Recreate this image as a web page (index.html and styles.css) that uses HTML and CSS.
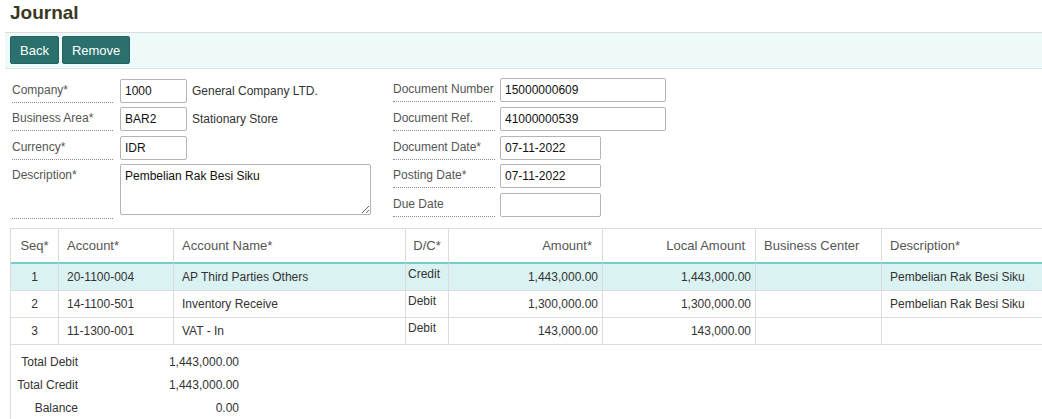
FILE: index.html
```html
<!DOCTYPE html>
<html>
<head>
<meta charset="utf-8">
<title>Journal</title>
<link rel="stylesheet" href="styles.css">
</head>
<body>
<h1 class="title">Journal</h1>
<div class="toolbar">
  <button class="btn">Back</button>
  <button class="btn">Remove</button>
</div>
<div class="form">
  <div class="col col-left">
    <div class="row">
      <label class="lbl">Company*</label>
      <input class="inp inp-s" value="1000">
      <span class="desc-text">General Company LTD.</span>
    </div>
    <div class="row">
      <label class="lbl">Business Area*</label>
      <input class="inp inp-s" value="BAR2">
      <span class="desc-text">Stationary Store</span>
    </div>
    <div class="row">
      <label class="lbl">Currency*</label>
      <input class="inp inp-s" value="IDR">
    </div>
    <div class="row">
      <label class="lbl lbl-tall">Description*</label>
      <textarea class="txa">Pembelian Rak Besi Siku</textarea>
    </div>
  </div>
  <div class="col col-right">
    <div class="row">
      <label class="lbl lbl-r">Document Number</label>
      <input class="inp inp-l" value="15000000609">
    </div>
    <div class="row">
      <label class="lbl lbl-r">Document Ref.</label>
      <input class="inp inp-l" value="41000000539">
    </div>
    <div class="row">
      <label class="lbl lbl-r">Document Date*</label>
      <input class="inp inp-m" value="07-11-2022">
    </div>
    <div class="row">
      <label class="lbl lbl-r">Posting Date*</label>
      <input class="inp inp-m" value="07-11-2022">
    </div>
    <div class="row">
      <label class="lbl lbl-r">Due Date</label>
      <input class="inp inp-m" value="">
    </div>
  </div>
</div>
<div class="grid-wrap">
  <table class="grid">
    <colgroup>
      <col class="c-seq">
      <col class="c-acc">
      <col class="c-name">
      <col class="c-dc">
      <col class="c-amt">
      <col class="c-lamt">
      <col class="c-bc">
      <col>
    </colgroup>
    <thead>
      <tr>
        <th class="center">Seq*</th>
        <th>Account*</th>
        <th>Account Name*</th>
        <th class="center">D/C*</th>
        <th class="right">Amount*</th>
        <th class="right">Local Amount</th>
        <th>Business Center</th>
        <th class="last">Description*</th>
      </tr>
    </thead>
    <tbody>
      <tr class="sel">
        <td class="center">1</td>
        <td>20-1100-004</td>
        <td>AP Third Parties Others</td>
        <td class="dc">Credit</td>
        <td class="num">1,443,000.00</td>
        <td class="num">1,443,000.00</td>
        <td></td>
        <td class="last">Pembelian Rak Besi Siku</td>
      </tr>
      <tr>
        <td class="center">2</td>
        <td>14-1100-501</td>
        <td>Inventory Receive</td>
        <td class="dc">Debit</td>
        <td class="num">1,300,000.00</td>
        <td class="num">1,300,000.00</td>
        <td></td>
        <td class="last">Pembelian Rak Besi Siku</td>
      </tr>
      <tr>
        <td class="center">3</td>
        <td>11-1300-001</td>
        <td>VAT - In</td>
        <td class="dc">Debit</td>
        <td class="num">143,000.00</td>
        <td class="num">143,000.00</td>
        <td></td>
        <td class="last"></td>
      </tr>
    </tbody>
  </table>
  <div class="totals">
    <div class="trow"><span class="tlbl">Total Debit</span><span class="tval">1,443,000.00</span></div>
    <div class="trow"><span class="tlbl">Total Credit</span><span class="tval">1,443,000.00</span></div>
    <div class="trow"><span class="tlbl">Balance</span><span class="tval">0.00</span></div>
  </div>
</div>
</body>
</html>
```
FILE: styles.css
```css
html, body {
  margin: 0;
  padding: 0;
  background: #fff;
  overflow: hidden;
}
body {
  font-family: "Liberation Sans", Arial, sans-serif;
  font-size: 12px;
  color: #333;
}
.title {
  margin: 0 0 8px 0;
  padding: 2px 0 0 10px;
  font-size: 19px;
  line-height: 22px;
  font-weight: bold;
  color: #3b3822;
}
.toolbar {
  margin-left: 5px;
  background: #eefafa;
  border-top: 1px solid #dcdcdc;
  border-bottom: 1px solid #d3eded;
  padding: 3px 5px 4px 5px;
  display: flex;
  gap: 3px;
}
.btn {
  height: 28px;
  padding: 0 9px;
  background: #2a716e;
  border: 1px solid #24625f;
  border-radius: 2px;
  color: #fff;
  font-family: "Liberation Sans", Arial, sans-serif;
  font-size: 13px;
}
.form {
  display: flex;
  margin-top: 9px;
  padding-left: 12px;
}
.col {
  display: flex;
  flex-direction: column;
}
.col-left {
  width: 381px;
  padding-top: 1px;
  gap: 4.33px;
}
.col-right {
  gap: 4.75px;
}
.row {
  display: flex;
  align-items: flex-start;
}
.lbl {
  box-sizing: border-box;
  width: 101px;
  height: 24px;
  line-height: 22px;
  margin-right: 7px;
  border-bottom: 1px dotted #8a8a8a;
  color: #555;
  white-space: nowrap;
}
.lbl-r {
  width: 102px;
  margin-right: 5px;
}
.lbl-tall {
  height: 55px;
}
.inp {
  box-sizing: border-box;
  height: 24px;
  border: 1px solid #b4b4b4;
  border-radius: 2px;
  padding: 0 4px;
  font-family: "Liberation Sans", Arial, sans-serif;
  font-size: 12px;
  color: #111;
  background: #fff;
}
.inp-s { width: 67px; }
.inp-m { width: 101px; }
.inp-l { width: 166px; }
.desc-text {
  margin-left: 5px;
  line-height: 24px;
  color: #333;
}
.txa {
  box-sizing: border-box;
  width: 251px;
  height: 51px;
  border: 1px solid #b4b4b4;
  border-radius: 2px;
  padding: 4px;
  font-family: "Liberation Sans", Arial, sans-serif;
  font-size: 12px;
  line-height: 14px;
  color: #111;
  margin: 0;
}
.grid-wrap {
  margin-top: 9px;
  margin-left: 10px;
  border-left: 1px solid #dcdcdc;
}
.grid {
  width: 100%;
  table-layout: fixed;
  border-collapse: separate;
  border-spacing: 0;
  border-top: 1px solid #dcdcdc;
}
.c-seq { width: 48px; }
.c-acc { width: 115px; }
.c-name { width: 232px; }
.c-dc { width: 43px; }
.c-amt { width: 154px; }
.c-lamt { width: 153px; }
.c-bc { width: 126px; }
.grid th {
  font-weight: normal;
  font-size: 13px;
  color: #555;
  text-align: left;
  line-height: 33px;
  padding: 0 8px;
  border-right: 1px solid #dcdcdc;
  border-bottom: 2px solid #74cfcb;
  white-space: nowrap;
  overflow: hidden;
}
.grid td {
  line-height: 26px;
  padding: 0 8px;
  border-right: 1px solid #dcdcdc;
  border-bottom: 1px solid #dcdcdc;
  white-space: nowrap;
  overflow: hidden;
  color: #333;
}
.grid .last { border-right: none; }
.grid .center { text-align: center; padding: 0; }
.grid th.right { text-align: right; padding-right: 10px; }
.grid td.num { text-align: right; padding-right: 4px; }
.grid td.dc {
  vertical-align: top;
  line-height: 18px;
  padding: 1px 2px 0 2px;
}
.grid tr.sel td { background: #daf2f2; }
.totals {
  padding: 6px 0 0 0;
}
.trow {
  display: flex;
  line-height: 23px;
  color: #333;
}
.tlbl {
  width: 67px;
  text-align: right;
}
.tval {
  width: 161px;
  text-align: right;
}
```
